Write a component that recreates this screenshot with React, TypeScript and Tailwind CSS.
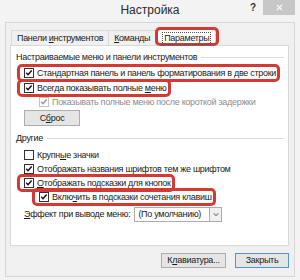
import React from "react";

const font = { fontFamily: '"Liberation Sans", Arial, sans-serif' };

function Check({ checked, disabled }: { checked?: boolean; disabled?: boolean }) {
  return (
    <span
      className={`relative inline-block w-[10px] h-[10px] shrink-0 border bg-white ${
        disabled ? "border-[#c4c4c4]" : "border-[#333333]"
      }`}
    >
      {checked && (
        <svg viewBox="0 0 10 10" className="absolute left-[0px] top-[0px] w-[8px] h-[8px]">
          <path
            d="M1.5 4.8 L3.8 7.2 L8.3 1.8"
            fill="none"
            stroke={disabled ? "#9a9a9a" : "#111111"}
            strokeWidth="1.8"
          />
        </svg>
      )}
    </span>
  );
}

function Row({
  children,
  checked,
  disabled,
  indent,
  mt,
  red,
}: {
  children: React.ReactNode;
  checked?: boolean;
  disabled?: boolean;
  indent?: boolean;
  mt: string;
  red?: boolean;
}) {
  return (
    <div className={`flex items-center h-[14px] ${mt} ${indent ? "pl-[23px]" : "pl-[8px]"}`}>
      <div className="relative flex items-center gap-[3px]">
        {red && (
          <span className="absolute -left-[7px] -right-[4px] -top-[4px] -bottom-[4px] border-[3px] border-[#d33a33] rounded-[5px]" />
        )}
        <Check checked={checked} disabled={disabled} />
        <span className={`relative whitespace-nowrap ${disabled ? "text-[#8e8e8e]" : "text-[#1a1a1a]"}`}>
          {children}
        </span>
      </div>
    </div>
  );
}

function Header({ children, mt }: { children: React.ReactNode; mt: string }) {
  return (
    <div className={`flex items-center h-[14px] ${mt} gap-[4px]`}>
      <span className="whitespace-nowrap text-[#1a1a1a]">{children}</span>
      <span className="flex-1 h-px bg-[#dcdcdc]" />
    </div>
  );
}

export default function App() {
  return (
    <div
      className="w-[300px] h-[280px] bg-[#f3f3f3] flex flex-col overflow-hidden text-[9px] leading-none tracking-[-0.3px]"
      style={font}
    >
      {/* title bar */}
      <div className="relative h-[22px] shrink-0 tracking-normal">
        <div className="absolute left-0 right-0 top-[4px] text-center text-[12px] text-[#2a2a2a]">Настройка</div>
        <div className="absolute left-[250px] top-[3px] text-[10px] font-bold text-[#333]">?</div>
        <div className="absolute right-[5px] top-0 w-[32px] h-[15px] bg-[#c7c7c7] flex items-center justify-center">
          <svg viewBox="0 0 8 8" className="w-[7px] h-[7px]">
            <path d="M1 1 L7 7 M7 1 L1 7" stroke="#ffffff" strokeWidth="1.3" />
          </svg>
        </div>
      </div>
      {/* client */}
      <div className="mx-[5px] mb-[3px] flex-1 border border-[#d6d6d6] bg-[#f0f0f0] flex flex-col pl-[4px] pr-[5px] pt-[5px]">
        {/* tabs */}
        <div className="flex items-end h-[17px] pl-[1px]">
          <div className="h-[15px] px-[5px] flex items-center border border-b-0 border-[#d9d9d9] bg-[#f0f0f0] text-[#1a1a1a] whitespace-nowrap">
            Панели&nbsp;<span className="underline">и</span>нструментов
          </div>
          <div className="h-[15px] px-[5px] flex items-center border border-b-0 border-l-0 border-[#d9d9d9] bg-[#f0f0f0] text-[#1a1a1a] whitespace-nowrap">
            <span className="underline">К</span>оманды
          </div>
          <div className="relative h-[17px] ml-[1px] px-[4px] flex items-center bg-white border border-b-0 border-[#d9d9d9] -mb-px z-10">
            <span className="absolute -left-[3px] -right-[4px] -top-[3px] bottom-[0px] border-[3px] border-[#d33a33] rounded-[5px]" />
            <span className="relative px-[1px] py-[1px] border border-dotted border-[#555] text-[#1a1a1a] whitespace-nowrap">
              Параметры
            </span>
          </div>
        </div>
        {/* panel */}
        <div className="h-[201px] bg-white border border-[#d9d9d9] flex flex-col pl-[5px] pr-[4px]">
          <Header mt="mt-[4px]">Настраиваемые меню и панели инструментов</Header>
          <Row checked red mt="mt-[2px]">
            Стандартная панель и панель форматирования в две строки
          </Row>
          <Row checked red mt="mt-[1px]">
            Всегда показывать полные <span className="underline">м</span>еню
          </Row>
          <Row checked disabled indent mt="mt-0">
            Показывать полные меню после короткой задержки
          </Row>
          <div className="mt-[1px] pl-[8px]">
            <div className="w-[56px] h-[16px] flex items-center justify-center border border-[#adadad] bg-[#e5e5e5] text-[#1a1a1a]">
              С<span className="underline">б</span>рос
            </div>
          </div>
          <Header mt="mt-[5px]">Другие</Header>
          <Row mt="mt-[3px]">
            Крупн<span className="underline">ы</span>е значки
          </Row>
          <Row checked mt="mt-0">
            Отображать названия шрифтов тем же шрифтом
          </Row>
          <Row checked red mt="mt-0">
            <span className="underline">О</span>тображать подсказки для кнопок
          </Row>
          <Row checked red indent mt="mt-0">
            Вклю<span className="underline">ч</span>ить в подсказки сочетания клавиш
          </Row>
          <div className="mt-[3px] pl-[8px] flex items-center h-[15px] gap-[4px]">
            <span className="whitespace-nowrap text-[#1a1a1a]">
              <span className="underline">Э</span>ффект при выводе меню:
            </span>
            <div className="ml-auto mr-[62px] w-[95px] h-[15px] border border-[#acacac] bg-white flex items-center">
              <span className="flex-1 pl-[3px] whitespace-nowrap text-[#1a1a1a]">(По умолчанию)</span>
              <span className="w-[12px] h-full border-l border-[#acacac] bg-[#f0f0f0] flex items-center justify-center">
                <svg viewBox="0 0 8 6" className="w-[6px] h-[5px]">
                  <path d="M1 1.5 L4 4.5 L7 1.5" fill="none" stroke="#333" strokeWidth="1.2" />
                </svg>
              </span>
            </div>
          </div>
        </div>
        {/* buttons */}
        <div className="flex justify-end gap-[9px] mt-[7px] pr-[0px]">
          <div className="w-[65px] h-[15px] flex items-center justify-center border border-[#adadad] bg-[#e5e5e5] text-[#1a1a1a] whitespace-nowrap">
            К<span className="underline">л</span>авиатура...
          </div>
          <div className="w-[54px] h-[15px] flex items-center justify-center border border-[#4f93d8] bg-[#e5e5e5] text-[#1a1a1a]">
            Закрыть
          </div>
        </div>
      </div>
    </div>
  );
}
